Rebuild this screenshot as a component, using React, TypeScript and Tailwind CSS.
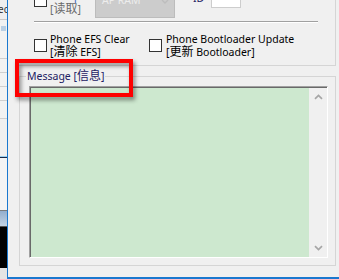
import type { ReactNode } from 'react'

// CJK glyphs are drawn a bit larger than the Latin UI font, as on the original dialog
function Zh({ children }: { children: ReactNode }) {
  return <span className="text-[12px] leading-none">{children}</span>
}

function CheckBox() {
  return <span className="block h-[13px] w-[13px] shrink-0 border border-[#333333] bg-white"></span>
}

function Chevron({ down = false }: { down?: boolean }) {
  return (
    <svg width="9" height="6" viewBox="0 0 9 6" className="block">
      <path
        d={down ? 'M1 1.2 L4.5 4.6 L8 1.2' : 'M1 4.8 L4.5 1.4 L8 4.8'}
        fill="none"
        stroke="#a6a6a6"
        strokeWidth="1.7"
      />
    </svg>
  )
}

// sliver of the window that sits behind the dialog
function BackWindow() {
  return (
    <div className="flex w-[7px] shrink-0 flex-col overflow-hidden">
      <div className="h-[19px] overflow-hidden whitespace-nowrap bg-[#efefef] pl-0 text-[10px] leading-[19px] text-[#333]">
        <span className="-ml-[2px]">ec</span>
      </div>
      <div className="h-[1px] bg-[#c9c9c9]"></div>
      <div className="h-[38px] bg-[#f2f2f2] pt-[6px] pl-[1px]">
        <div className="h-[5px] w-[5px] bg-[#b9cfe4]"></div>
      </div>
      <div className="h-[1px] bg-[#cfcfcf]"></div>
      <div className="h-[13px] bg-[#f2f2f2]"></div>
      <div className="h-[1px] bg-[#cfcfcf]"></div>
      <div className="h-[13px] bg-[#f2f2f2]"></div>
      <div className="h-[1px] bg-[#cfcfcf]"></div>
      <div className="h-[13px] bg-[#f2f2f2]"></div>
      <div className="h-[1px] bg-[#cfcfcf]"></div>
      <div className="h-[17px] bg-[#f2f2f2]"></div>
      <div className="h-[1px] bg-[#cfcfcf]"></div>
      <div className="h-[37px] bg-[#f0f0f0]"></div>
      <div className="h-[1px] bg-[#9bd0ee]"></div>
      <div className="h-[1px] bg-[#1a2848]"></div>
      <div className="h-[52px] bg-[#f4f4f4]"></div>
      <div className="h-[1px] bg-[#7a7a7a]"></div>
      <div className="h-[15px] bg-gradient-to-b from-[#93aecd] to-[#c3d3e4]"></div>
      <div className="h-[1px] bg-[#555555]"></div>
      <div className="h-[41px] bg-black"></div>
      <div className="h-[11px] bg-[#e4e4e4]"></div>
    </div>
  )
}

export default function App() {
  return (
    <div className="relative flex h-[279px] w-[339px] overflow-hidden bg-[#f0f0f0] font-['Noto_Sans','Noto_Sans_CJK_SC',sans-serif] text-[10.5px] leading-[13px] text-black">
      <BackWindow />

      <div className="flex h-full flex-1 flex-col border-b-2 border-l border-[#1a78cf] bg-[#f0f0f0]">
        {/* Options group (top is scrolled out of view) */}
        <div className="-mt-[14px] ml-[11px] w-[317px] shrink-0 border-r border-b border-[#d5d5d5] pb-[6px]">
          <div className="flex h-[32px] items-start">
            <div className="ml-[15px] mt-[8px]">
              <CheckBox />
            </div>
            <div className="ml-[3px] mt-[4px] w-[45px] text-[#6b6b6b]">
              <div className="text-[#2f65c0]">Dump</div>
              <div>
                [<Zh>读取</Zh>]
              </div>
            </div>
            <div className="flex h-[32px] w-[80px] items-start justify-between border border-[#bcbcbc] bg-[#cccccc] pt-[7px] pl-[6px] pr-[5px] text-[#ededed]">
              <span>AP RAM</span>
              <span className="mt-[5px]">
                <svg width="8" height="5" viewBox="0 0 8 5" className="block">
                  <path d="M1 1 L4 4 L7 1" fill="none" stroke="#bdbdbd" strokeWidth="1.3" />
                </svg>
              </span>
            </div>
            <div className="ml-[18px] mt-[6px] w-[18px] text-[#1d2163]">ID</div>
            <div className="mt-[2px] h-[20px] w-[30px] border border-[#cdcdcd] bg-white"></div>
          </div>

          <div className="ml-[15px] mt-[3px] h-[2px] w-[284px] border-t border-b border-t-[#a0a0a0] border-b-white"></div>

          <div className="mt-[10px] flex items-start">
            <div className="ml-[15px] mt-[6px]">
              <CheckBox />
            </div>
            <div className="ml-[3px] w-[96px] whitespace-nowrap">
              <div>Phone EFS Clear</div>
              <div>
                [<Zh>清除</Zh> EFS]
              </div>
            </div>
            <div className="ml-[3px] mt-[6px]">
              <CheckBox />
            </div>
            <div className="ml-[4px] whitespace-nowrap">
              <div>Phone Bootloader Update</div>
              <div>
                [<Zh>更新</Zh> Bootloader]
              </div>
            </div>
          </div>
        </div>

        {/* Message group */}
        <div className="relative ml-[11px] mt-[10px] h-[190px] w-[317px] shrink-0 border border-[#d5d5d5]">
          <span className="absolute -top-[7px] left-[6px] bg-[#f0f0f0] px-[1px] whitespace-nowrap text-[#1d2163]">
            Message [<Zh>信息</Zh>]
          </span>
          <div className="ml-[9px] mt-[9px] flex h-[172px] w-[299px] border border-t-[#a0a0a0] border-l-[#a0a0a0] border-r-white border-b-white">
            <div className="flex flex-1 border-t border-l border-[#696969]">
              <div className="flex-1 bg-[#cde8cf]"></div>
              <div className="flex w-[18px] flex-col items-center justify-between bg-[#f0f0f0] pt-[6px] pb-[6px]">
                <Chevron />
                <Chevron down />
              </div>
            </div>
          </div>
        </div>
      </div>

      {/* red annotation frame */}
      <div className="pointer-events-none absolute left-[15px] top-[59px] h-[38px] w-[118px] border-4 border-[#fe0000] drop-shadow-[2px_3px_2px_rgba(0,0,0,0.45)]"></div>
    </div>
  )
}
